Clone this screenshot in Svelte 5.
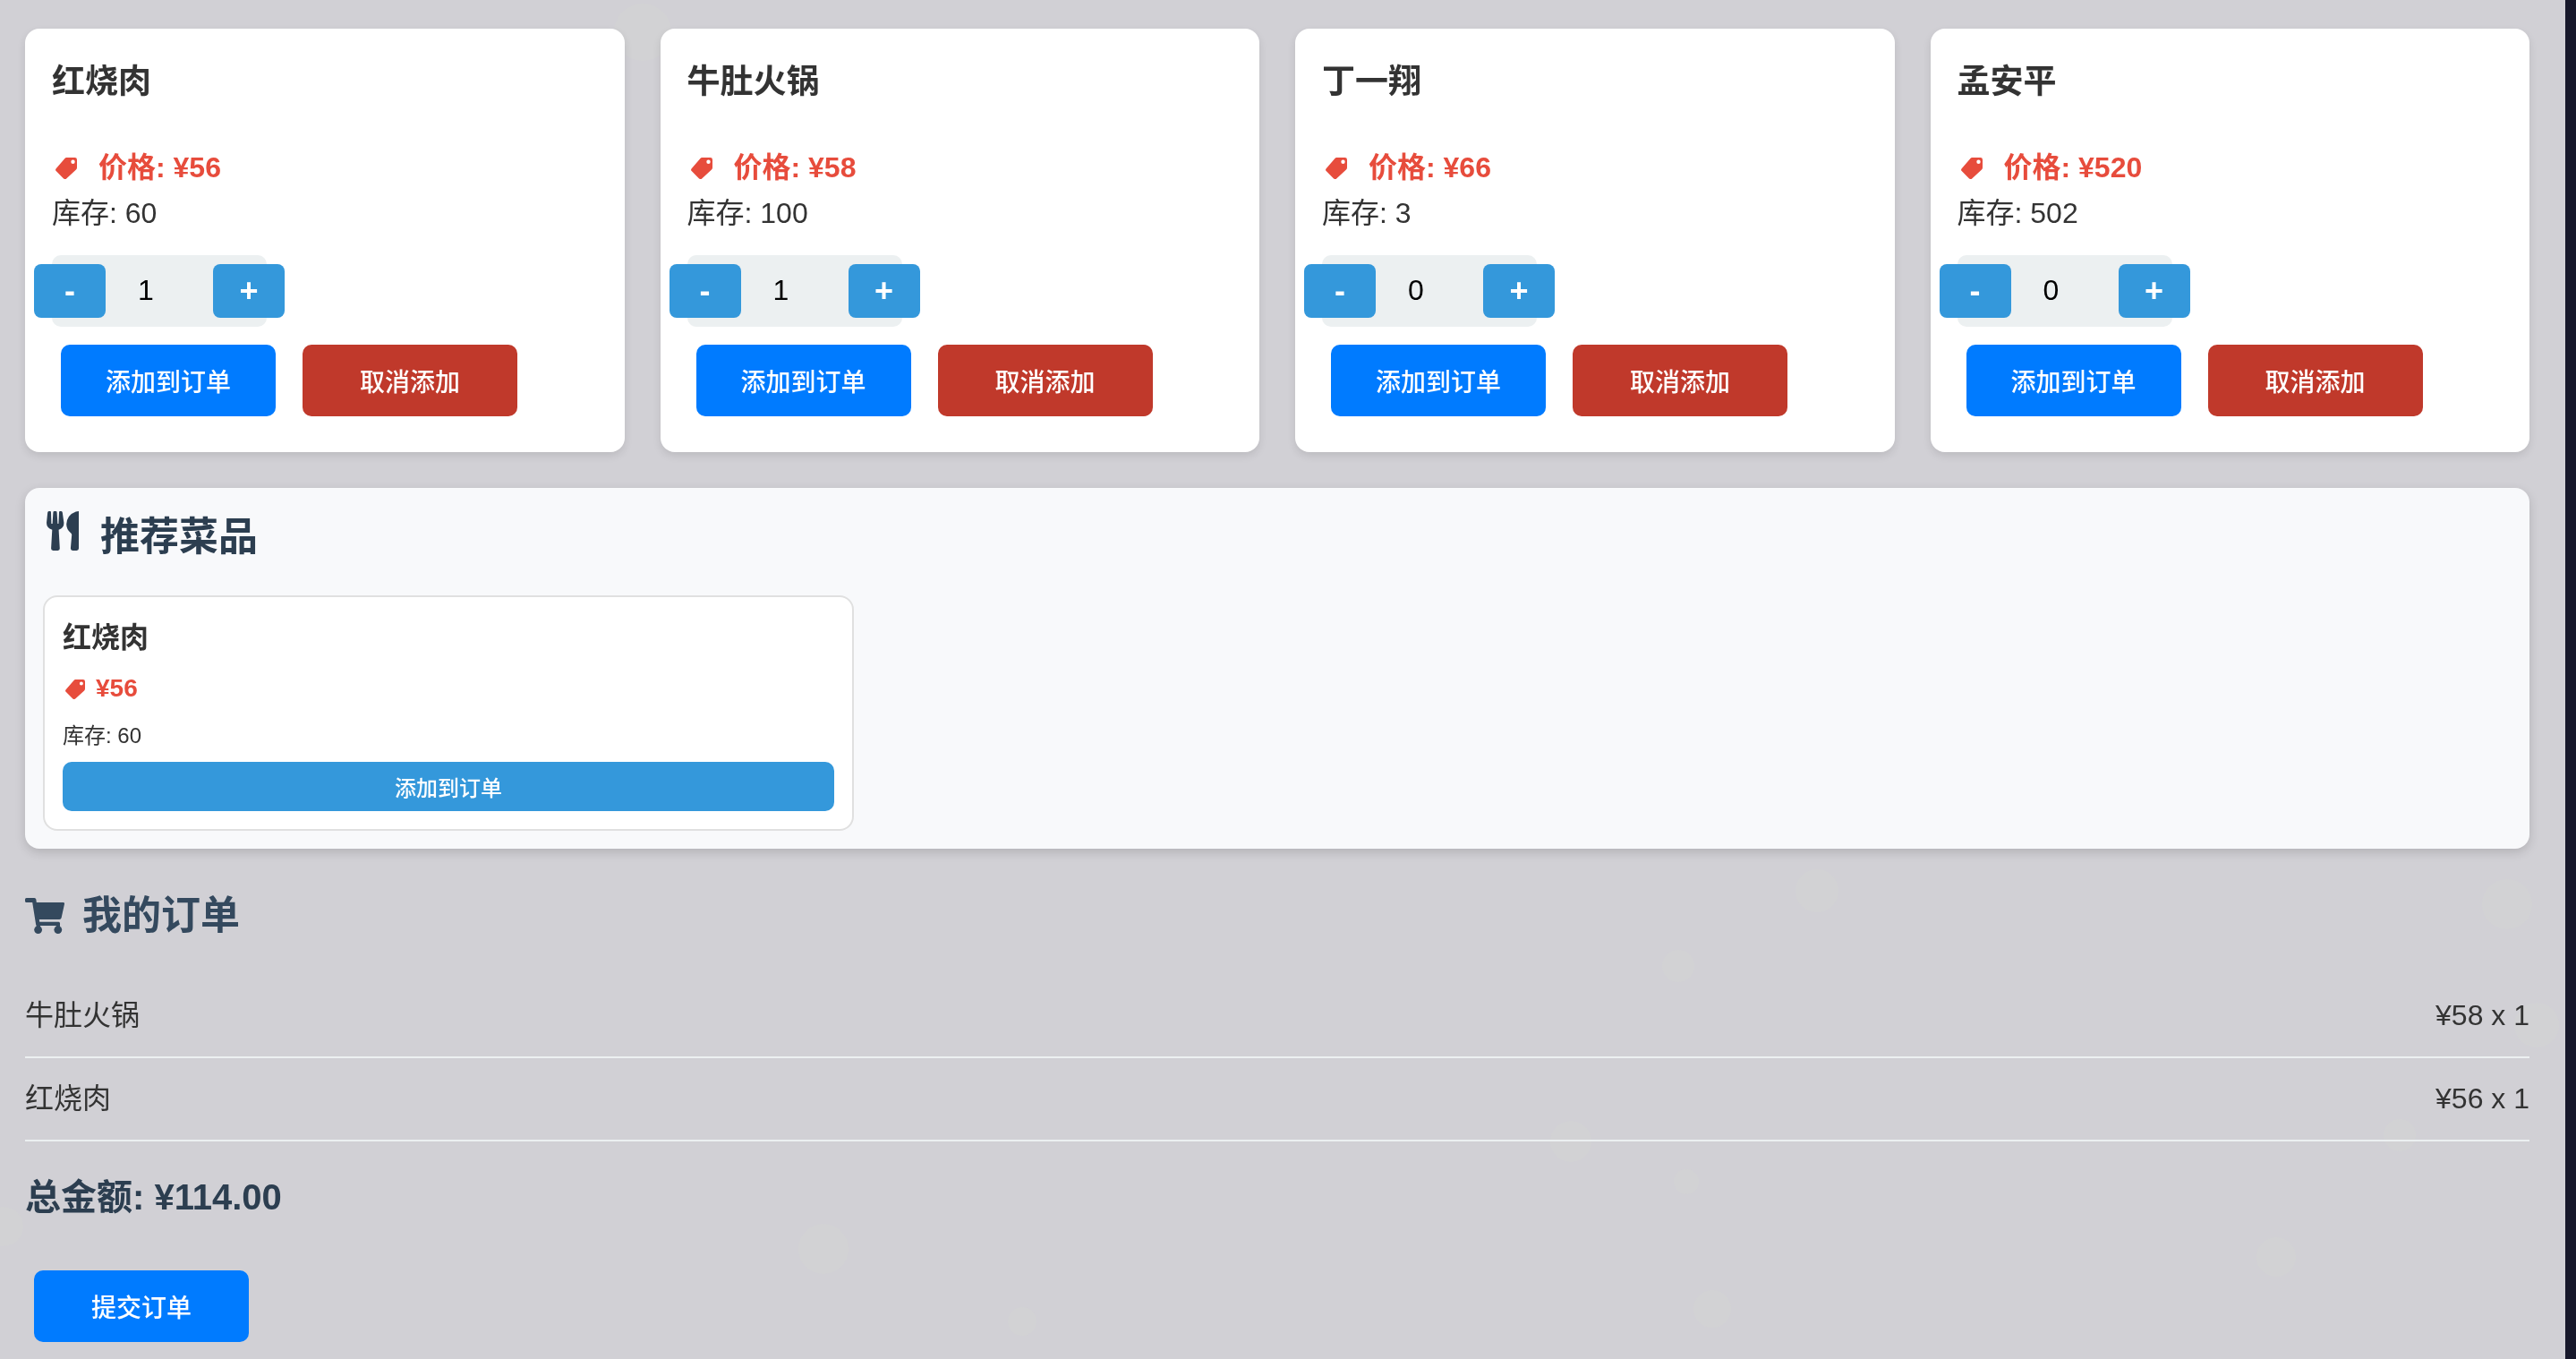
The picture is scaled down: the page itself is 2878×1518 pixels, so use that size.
<script>
  let dishes = $state([
    { name: '红烧肉', price: 56, stock: 60, qty: 1 },
    { name: '牛肚火锅', price: 58, stock: 100, qty: 1 },
    { name: '丁一翔', price: 66, stock: 3, qty: 0 },
    { name: '孟安平', price: 520, stock: 502, qty: 0 },
  ]);

  const recommended = [{ name: '红烧肉', price: 56, stock: 60 }];

  const order = [
    { name: '牛肚火锅', price: 58, qty: 1 },
    { name: '红烧肉', price: 56, qty: 1 },
  ];

  const total = order.reduce((sum, item) => sum + item.price * item.qty, 0).toFixed(2);

  const bubbles = [
    [718, 36, 32],
    [2030, 995, 24],
    [1875, 1079, 18],
    [1755, 1275, 23],
    [1884, 1320, 14],
    [1913, 1462, 21],
    [1142, 1476, 16],
    [920, 1395, 28],
    [2543, 1404, 22],
    [2801, 1010, 28],
    [2834, 1145, 25],
    [2681, 1268, 18],
    [4, 1370, 22],
  ];

  function change(dish, step) {
    dish.qty = Math.min(dish.stock, Math.max(0, Number(dish.qty) + step));
  }
</script>

{#snippet tag()}
  <svg class="tag" viewBox="0 0 24 24" aria-hidden="true">
    <path fill-rule="evenodd" d="M12.3 0H21.6Q24 0 24 2.4V11.2Q24 12.6 23 13.6L12.2 23.4Q10.4 24.8 8.8 23.2L.7 15.1Q-.6 13.6.7 12.2L10.4 1Q11.2 0 12.3 0ZM19.5 2.6A2.2 2.2 0 1 0 19.5 7A2.2 2.2 0 1 0 19.5 2.6Z" />
  </svg>
{/snippet}

<main>
  <svg class="bubbles" viewBox="0 0 2878 1518" preserveAspectRatio="xMidYMid slice" aria-hidden="true">
    {#each bubbles as [x, y, r]}
      <circle cx={x} cy={y} {r} />
    {/each}
  </svg>

  <section class="menu">
    {#each dishes as dish, i}
      <article class="dish">
        <h3>{dish.name}</h3>
        <p class="price">{@render tag()}<span>价格: ¥{dish.price}</span></p>
        <p>库存: {dish.stock}</p>
        <div class="stepper">
          <button class="step" aria-label="减少" onclick={() => change(dish, -1)}>-</button>
          <input id="qty-{i}" aria-label="{dish.name}数量" inputmode="numeric" bind:value={dish.qty} />
          <button class="step" aria-label="增加" onclick={() => change(dish, 1)}>+</button>
        </div>
        <div class="actions">
          <button class="btn">添加到订单</button>
          <button class="btn cancel" onclick={() => (dish.qty = 0)}>取消添加</button>
        </div>
      </article>
    {/each}
  </section>

  <section class="recommend">
    <h2>
      <svg class="cutlery" viewBox="0 0 36 44" aria-hidden="true">
        <path d="M1.2 1.4Q1.5 0 3 0H4Q5 0 5 1.4L5.4 14H6.6L7.4 1.4Q7.5 0 8.6 0H10.4Q11.5 0 11.6 1.4L12.4 14H13.4L14 1.4Q14 0 15 0H16Q17.5 0 17.8 1.4L19.4 13Q19.6 18.6 13.6 20.8L14.8 41.6Q14.9 44 12.6 44H7.4Q5 44 5.1 41.6L6.3 20.8Q0 18.6 0 13Z" />
        <path d="M36 0V41.6Q36 44 33.6 44H29.2Q26.8 44 26.9 41.6L28.2 26.4Q28.2 25 27 24.2Q22.2 20.6 22.2 14.6Q22.8 4 32.8.4Q34 0 36 0Z" />
      </svg>
      <span>推荐菜品</span>
    </h2>
    <div class="picks">
      {#each recommended as dish}
        <article class="pick">
          <h4>{dish.name}</h4>
          <p class="price">{@render tag()}<span>¥{dish.price}</span></p>
          <p>库存: {dish.stock}</p>
          <button>添加到订单</button>
        </article>
      {/each}
    </div>
  </section>

  <section class="order">
    <h2>
      <svg class="cart" viewBox="0 0 44 40" aria-hidden="true">
        <path d="M1.6 0H10.4Q12 0 12.3 1.6L12.8 5H42.6Q44.2 5 44 6.8L40.6 22.2Q40.2 24 38.4 24H15.8L16.2 26.8H37.6Q39 26.8 39 28.4V31H13.8Q12.4 31 12.1 29.6L8.2 5H1.6Q0 5 0 3.4V1.6Q0 0 1.6 0Z" />
        <circle cx="14.6" cy="35.6" r="4.4" />
        <circle cx="36.8" cy="35.6" r="4.4" />
        <path d="M12.6 28H17V33H12.6ZM34.8 28H39V33H34.8Z" />
      </svg>
      <span>我的订单</span>
    </h2>
    <ul>
      {#each order as item}
        <li><span>{item.name}</span><span>¥{item.price} x {item.qty}</span></li>
      {/each}
    </ul>
    <p class="total">总金额: ¥{total}</p>
    <button class="btn">提交订单</button>
  </section>
</main>

<style>
  :global(body) {
    background: #17182b;
  }

  main,
  button,
  input {
    font-family: 'Liberation Sans', 'Noto Sans CJK SC', sans-serif;
  }

  main {
    box-sizing: border-box;
    isolation: isolate;
    min-height: 100vh;
    margin-right: 12px;
    padding: 32px 40px 9px 28px;
    background: #d1d0d5;
    color: #333;
    font-size: 32px;
    line-height: 51px;
  }

  h2,
  h3,
  h4,
  p,
  ul {
    margin: 0;
    padding: 0;
  }

  svg {
    flex: none;
    fill: currentColor;
  }

  .bubbles {
    position: fixed;
    inset: 0;
    z-index: -1;
    width: 100%;
    height: 100%;
    fill: #d2d2d4;
  }

  button {
    border: 0;
    padding: 0;
    color: #fff;
    font-weight: 500;
    cursor: pointer;
  }

  .menu {
    display: grid;
    grid-template-columns: repeat(4, 1fr);
    gap: 40px;
  }

  .dish {
    padding: 30px;
    border-radius: 16px;
    background: #fff;
    box-shadow: 0 4px 10px rgba(0, 0, 0, 0.1);
  }

  .dish h3 {
    margin-bottom: 40px;
    font-size: 37px;
    line-height: 60px;
  }

  .price {
    display: flex;
    align-items: center;
    color: #e74c3c;
    font-weight: bold;
  }

  .tag {
    width: 24px;
    height: 24px;
    margin: 0 24px 0 4px;
  }

  .stepper {
    display: flex;
    align-items: center;
    justify-content: center;
    width: 240px;
    height: 80px;
    margin-top: 21px;
    border-radius: 10px;
    background: #ecf0f1;
  }

  .step {
    flex: none;
    width: 80px;
    height: 60px;
    border-radius: 8px;
    background: #3498db;
    font-size: 36px;
    font-weight: bold;
  }

  .stepper input {
    box-sizing: border-box;
    flex: none;
    width: 120px;
    height: 60px;
    padding: 0 30px 2px 0;
    border: 0;
    background: none;
    color: #000;
    font-size: 32px;
    text-align: center;
  }

  .actions {
    display: flex;
    gap: 30px;
    padding: 20px 10px 10px;
  }

  .btn {
    width: 240px;
    height: 80px;
    border-radius: 10px;
    background: #007bff;
    font-size: 28px;
  }

  .cancel {
    background: #c0392b;
  }

  .recommend {
    margin-top: 40px;
    padding: 20px;
    border-radius: 16px;
    background: #f8f9fb;
    box-shadow: 0 4px 12px rgba(0, 0, 0, 0.15);
  }

  h2 {
    display: flex;
    font-size: 44px;
    line-height: 70px;
  }

  .recommend h2 {
    gap: 24px;
    margin-bottom: 30px;
    padding-left: 4px;
    color: #2c3e50;
  }

  .cutlery {
    width: 36px;
    height: 44px;
    margin-top: 6px;
  }

  .picks {
    display: grid;
    grid-template-columns: repeat(3, 1fr);
    gap: 20px;
  }

  .pick {
    padding: 20px;
    border: 2px solid #e0e0e0;
    border-radius: 16px;
    background: #fff;
    font-size: 24px;
    line-height: 38px;
  }

  .pick h4 {
    margin-bottom: 8px;
    font-size: 32px;
    line-height: 51px;
  }

  .pick .price {
    margin-bottom: 12px;
    font-size: 28px;
    line-height: 45px;
  }

  .pick .tag {
    width: 22px;
    height: 22px;
    margin: 2px 12px 0 3px;
  }

  .pick button {
    display: block;
    width: 100%;
    height: 55px;
    margin-top: 10px;
    border-radius: 10px;
    background: #3498db;
    font-size: 24px;
  }

  .order h2 {
    align-items: center;
    gap: 20px;
    margin: 40px 0 31px;
    color: #34495e;
  }

  .cart {
    width: 44px;
    height: 40px;
  }

  .order ul {
    list-style: none;
  }

  .order li {
    display: flex;
    justify-content: space-between;
    padding: 20px 0;
    border-bottom: 2px solid #ecf0f1;
  }

  .total {
    margin: 30px 0 40px;
    color: #2c3e50;
    font-size: 40px;
    font-weight: bold;
    line-height: 64px;
  }

  .order .btn {
    margin: 10px;
  }
</style>
